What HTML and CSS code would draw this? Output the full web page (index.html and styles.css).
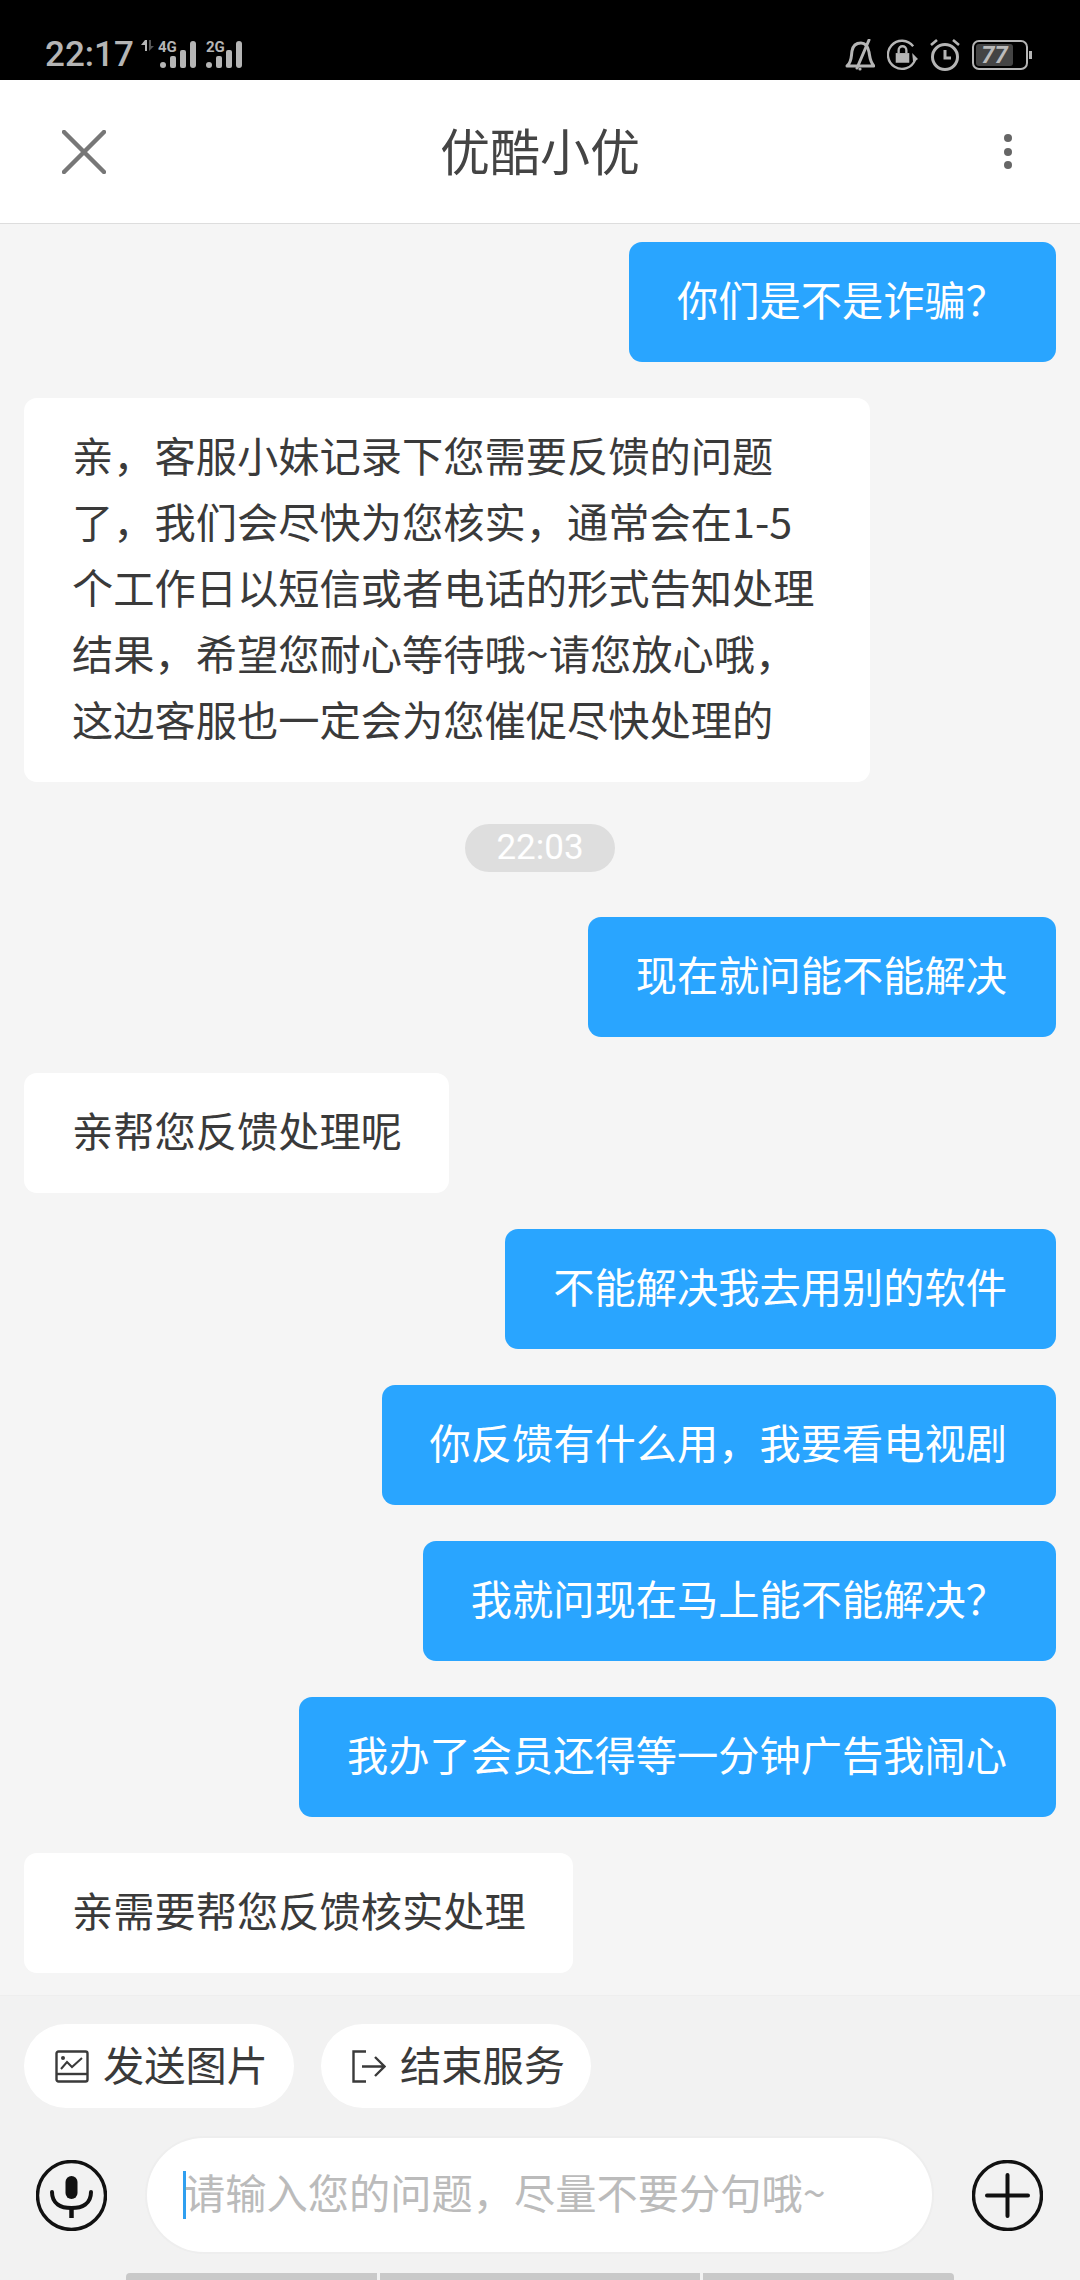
FILE: index.html
```html
<!DOCTYPE html>
<html lang="zh-CN">
<head>
    <meta charset="UTF-8">
    <meta name="viewport" content="width=device-width, initial-scale=1.0">
    <title>优酷小优</title>
    <link rel="stylesheet" href="styles.css">
</head>
<body>
    <div class="app">
        <div class="status-bar">
            <span class="clock">22:17</span>
            <svg class="net-arrows" width="14" height="12" viewBox="0 0 14 12">
                <path d="M4 0 L4 11 L6 11 L6 0 Z M4 0 L0 5 L4 5 Z" fill="#b5b5b5"/>
                <path d="M8 0 L8 11 L13 6 L10 6 L10 0 Z" fill="#555"/>
            </svg>
            <svg class="signal" width="40" height="30" viewBox="0 0 40 30">
                <text x="0" y="13" class="net-label">4G</text>
                <rect x="2" y="23" width="6" height="6" rx="3" fill="#b5b5b5"/>
                <rect x="12" y="17" width="6" height="12" rx="2" fill="#b5b5b5"/>
                <rect x="22" y="11" width="6" height="18" rx="2" fill="#b5b5b5"/>
                <rect x="32" y="2" width="6" height="27" rx="3" fill="#b5b5b5"/>
            </svg>
            <svg class="signal" width="40" height="30" viewBox="0 0 40 30">
                <text x="0" y="13" class="net-label">2G</text>
                <rect x="0" y="23" width="6" height="6" rx="3" fill="#b5b5b5"/>
                <rect x="10" y="17" width="6" height="12" rx="2" fill="#b5b5b5"/>
                <rect x="20" y="11" width="6" height="18" rx="2" fill="#b5b5b5"/>
                <rect x="30" y="2" width="6" height="27" rx="3" fill="#b5b5b5"/>
            </svg>
            <div class="status-right">
                <svg width="30" height="32" viewBox="0 0 30 32" fill="none" stroke="#b5b5b5" stroke-width="3">
                    <path d="M2 27 C7 23 6 18 7 12 C8 6 12 4 16 4 C21 4 23 8 24 13 C25 19 25 23 29 27 Z" stroke-linejoin="round"/>
                    <path d="M12 29 L24 1" stroke-linecap="round"/>
                    <circle cx="15" cy="30" r="1.6" fill="#b5b5b5" stroke="none"/>
                </svg>
                <svg width="31" height="32" viewBox="0 0 32 32" fill="none">
                    <path d="M29 21 A14.5 14.5 0 1 1 27 7" stroke="#b5b5b5" stroke-width="2.4"/>
                    <path d="M26 14 L32 20 L27 24 Z" fill="#b5b5b5"/>
                    <rect x="9" y="14" width="14" height="10" fill="#b5b5b5"/>
                    <path d="M12 14 V11 a4 4 0 0 1 8 0 V14" stroke="#b5b5b5" stroke-width="2.4"/>
                </svg>
                <svg width="30" height="32" viewBox="0 0 30 32" fill="none" stroke="#b5b5b5">
                    <circle cx="15" cy="18" r="12.5" stroke-width="3"/>
                    <path d="M15 11 V19 H21" stroke-width="3"/>
                    <path d="M1 6 L7 1 M29 6 L23 1" stroke-width="2.6"/>
                </svg>
                <div class="battery">
                    <div class="battery-body"><span class="battery-level">77</span></div>
                    <div class="battery-tip"></div>
                </div>
            </div>
        </div>

        <header class="top-bar">
            <svg class="close-icon" width="44" height="44" viewBox="0 0 44 44">
                <path d="M2 2 L42 42 M42 2 L2 42" stroke="#777" stroke-width="4.5" stroke-linecap="round"/>
            </svg>
            <h1 class="title">优酷小优</h1>
            <div class="more-dots"><i></i><i></i><i></i></div>
        </header>

        <main class="chat">
            <div class="msg msg-me">你们是不是诈骗？</div>
            <div class="msg msg-bot">亲，客服小妹记录下您需要反馈的问题了，我们会尽快为您核实，通常会在1-5个工作日以短信或者电话的形式告知处理结果，希望您耐心等待哦~请您放心哦，这边客服也一定会为您催促尽快处理的</div>
            <div class="time-tag">22:03</div>
            <div class="msg msg-me">现在就问能不能解决</div>
            <div class="msg msg-bot">亲帮您反馈处理呢</div>
            <div class="msg msg-me">不能解决我去用别的软件</div>
            <div class="msg msg-me">你反馈有什么用，我要看电视剧</div>
            <div class="msg msg-me">我就问现在马上能不能解决？</div>
            <div class="msg msg-me">我办了会员还得等一分钟广告我闹心</div>
            <div class="msg msg-bot">亲需要帮您反馈核实处理</div>
        </main>

        <footer class="footer">
            <div class="actions">
                <div class="pill">
                    <svg width="34" height="33" viewBox="0 0 34 33" fill="none" stroke="#3a3a3a" stroke-width="2.4">
                        <rect x="1.5" y="1.5" width="31" height="30" rx="2"/>
                        <path d="M1.5 24 H32.5"/>
                        <path d="M6 19 L12 12 L17 17 L27 8" stroke-width="2"/>
                        <circle cx="8" cy="8" r="2" fill="#3a3a3a" stroke="none"/>
                    </svg>
                    <span>发送图片</span>
                </div>
                <div class="pill">
                    <svg width="34" height="33" viewBox="0 0 34 33" fill="none" stroke="#3a3a3a" stroke-width="2.4">
                        <path d="M14 1.5 H1.5 V31.5 H14"/>
                        <path d="M10 16.5 H32 M23 7 L32.5 16.5 L23 26"/>
                    </svg>
                    <span>结束服务</span>
                </div>
            </div>
            <div class="input-row">
                <svg width="71" height="71" viewBox="0 0 71 71" fill="none" stroke="#111">
                    <circle cx="35.5" cy="35.5" r="34" stroke-width="3.4"/>
                    <rect x="29.5" y="16" width="12" height="23" rx="6" fill="#111" stroke="none"/>
                    <path d="M16 32 C16 44 25 48 35.5 48 C46 48 55 44 55 32" stroke-width="4" stroke-linecap="round"/>
                    <path d="M35.5 48 V58" stroke-width="4.5"/>
                </svg>
                <div class="input-box"><i class="caret"></i><span class="placeholder">请输入您的问题，尽量不要分句哦~</span></div>
                <svg width="71" height="71" viewBox="0 0 71 71" fill="none" stroke="#111">
                    <circle cx="35.5" cy="35.5" r="34" stroke-width="3.4"/>
                    <path d="M15 35.5 H56 M35.5 15 V56" stroke-width="4" stroke-linecap="round"/>
                </svg>
            </div>
            <div class="bars"><i class="bar-a"></i><i class="bar-b"></i><i class="bar-a"></i></div>
        </footer>
    </div>
</body>
</html>
```

FILE: styles.css
```css
* {
    box-sizing: border-box;
}
body {
    margin: 0;
    font-family: "Noto Sans CJK SC", "Noto Sans", sans-serif;
    color: #3a3a3a;
}
.app {
    width: 1080px;
    height: 2280px;
    display: flex;
    flex-direction: column;
    overflow: hidden;
    background-color: #f5f5f5;
}

/* status bar */
.status-bar {
    height: 80px;
    flex: none;
    display: flex;
    align-items: flex-start;
    padding: 39px 48px 0 45px;
    background-color: #000;
    color: #b5b5b5;
}
.clock {
    font-family: Roboto, sans-serif;
    font-size: 35px;
    font-weight: 500;
    line-height: 32px;
    width: 96px;
}
.net-arrows {
    margin: 1px 3px 0 0;
}
.signal {
    margin-right: 8px;
}
.net-label {
    font-family: Roboto, sans-serif;
    font-size: 15px;
    font-weight: 700;
    fill: #b5b5b5;
}
.status-right {
    margin-left: auto;
    display: flex;
    gap: 12px;
}
.battery {
    display: flex;
    align-items: center;
}
.battery-body {
    width: 56px;
    height: 30px;
    padding: 2px;
    border: 2px solid #b5b5b5;
    border-radius: 7px;
}
.battery-level {
    display: block;
    width: 37px;
    height: 22px;
    background-color: #444;
    border-radius: 3px;
    font-family: Roboto, sans-serif;
    font-size: 24px;
    font-weight: 700;
    font-style: italic;
    line-height: 22px;
    text-align: center;
    color: #bbb;
}
.battery-tip {
    width: 3px;
    height: 8px;
    margin-left: 1px;
    background-color: #b5b5b5;
}

/* top bar */
.top-bar {
    height: 144px;
    flex: none;
    display: grid;
    grid-template-columns: 1fr auto 1fr;
    align-items: center;
    padding: 0 68px;
    background-color: #fff;
    border-bottom: 1px solid #ddd;
}
.close-icon {
    margin-left: -6px;
}
.title {
    margin: 0;
    padding-bottom: 6px;
    font-size: 50px;
    font-weight: 400;
    color: #444;
}
.more-dots {
    justify-self: end;
    display: flex;
    flex-direction: column;
    gap: 5.5px;
}
.more-dots i {
    width: 8px;
    height: 8px;
    border-radius: 50%;
    background-color: #666;
}

/* messages */
.chat {
    flex: 1;
    min-height: 0;
    display: flex;
    flex-direction: column;
    gap: 36px;
    padding: 18px 24px 0;
}
.msg {
    max-width: 846px;
    padding: 23px 47px 31px 48px;
    border-radius: 13px;
    font-size: 41.25px;
    line-height: 66px;
}
.msg-me {
    align-self: flex-end;
    padding-right: 49px;
    background-color: #29a5ff;
    color: #fff;
}
.msg-bot {
    align-self: flex-start;
    background-color: #fff;
    color: #3a3a3a;
}
.time-tag {
    align-self: center;
    width: 150px;
    height: 48px;
    margin: 6px 0 9px;
    border-radius: 24px;
    background-color: #dedede;
    color: #fff;
    font-family: Roboto, sans-serif;
    font-size: 35px;
    line-height: 47px;
    text-align: center;
}

/* bottom area */
.footer {
    height: 285px;
    flex: none;
    padding-top: 28px;
    background-color: #f2f2f2;
    border-top: 1px solid #eee;
}
.actions {
    display: flex;
    gap: 27px;
    padding-left: 24px;
}
.pill {
    height: 84px;
    display: flex;
    align-items: center;
    gap: 14px;
    padding: 0 26px 0 31px;
    border-radius: 42px;
    background-color: #fff;
    font-size: 41.25px;
    color: #3a3a3a;
}
.pill span {
    padding-bottom: 6px;
}
.input-row {
    display: flex;
    align-items: center;
    gap: 40px;
    margin-top: 30px;
    padding: 0 37px 0 36px;
}
.input-row svg {
    flex: none;
}
.input-box {
    flex: 1;
    height: 114px;
    display: flex;
    align-items: center;
    padding-left: 36px;
    border-radius: 57px;
    background-color: #fff;
    box-shadow: 0 0 0 2px #eee;
    font-size: 41.25px;
    color: #bbb;
}
.caret {
    flex: none;
    width: 3px;
    height: 48px;
    margin-right: -2px;
    background-color: #2f9ff0;
}
.placeholder {
    padding-bottom: 8px;
}
.bars {
    display: flex;
    gap: 3px;
    margin-top: 21px;
    padding-left: 126px;
}
.bars i {
    height: 7px;
    background-color: #c9c9c9;
}
.bars .bar-a {
    width: 251px;
    border-radius: 4px 0 0 0;
}
.bars .bar-a:last-child {
    border-radius: 0 4px 0 0;
}
.bars .bar-b {
    width: 320px;
}
```
